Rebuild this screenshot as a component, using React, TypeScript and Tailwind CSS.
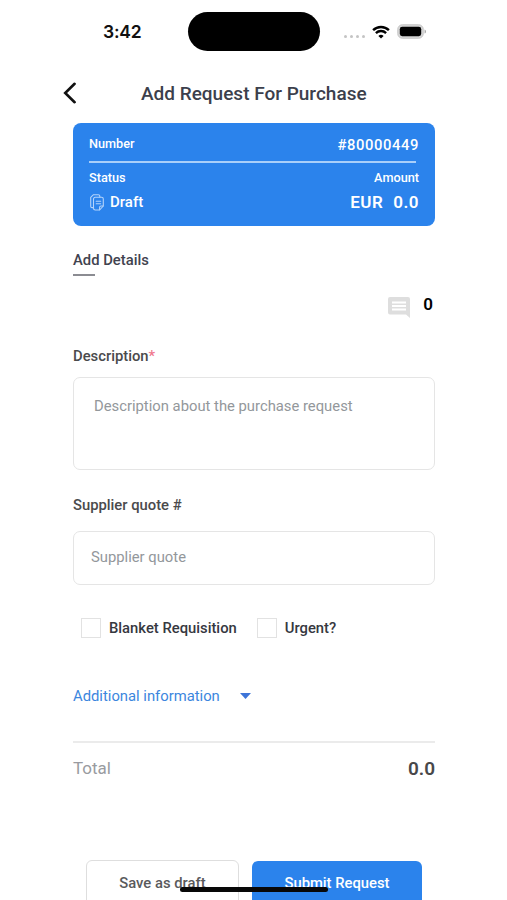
import type { ReactNode } from "react";

interface CheckProps {
  label: string;
}

function StatusBar() {
  return (
    <div className="relative flex h-[63px] items-center">
      <span className="ml-[103px] mt-[1px] w-[85px] font-['Inter'] text-[17.5px] font-semibold leading-none tracking-[-0.2px] text-[#111]">
        3:42
      </span>
      <div className="h-[39px] w-[132px] rounded-full bg-black" />
      <div className="ml-[24px] mt-[10px] flex gap-[3px]">
        {[0, 1, 2, 3].map((i) => (
          <span key={i} className="size-[3px] rounded-full bg-[#c4c4c4]" />
        ))}
      </div>
      <svg className="ml-[7px] h-[14px] w-[18px]" viewBox="0 0 18 14" fill="none">
        <path d="M1.1 5.2a11.2 11.2 0 0 1 15.8 0" stroke="#000" strokeWidth="2.4" />
        <path d="M3.9 8.1a7.2 7.2 0 0 1 10.2 0" stroke="#000" strokeWidth="2.3" />
        <path d="M9 13.6 6.4 11a3.7 3.7 0 0 1 5.2 0z" fill="#000" />
      </svg>
      <svg className="ml-[7px] h-[15px] w-[30px]" viewBox="0 0 30 15">
        <rect x=".75" y=".75" width="25.5" height="13.5" rx="4.6" fill="#d6d6d6" stroke="#c6c6c6" />
        <rect x="2.8" y="2.8" width="21.4" height="9.4" rx="2.4" fill="#000" />
        <path d="M27.6 5.4c1.7.6 1.7 3.6 0 4.2z" fill="#999" />
      </svg>
    </div>
  );
}

function DraftIcon() {
  return (
    <svg
      className="h-[17px] w-[14px]"
      viewBox="0 0 14 17"
      fill="none"
      stroke="#b4d3fa"
      strokeWidth="1.1"
      strokeLinecap="round"
      strokeLinejoin="round"
    >
      <path d="M9.8 3V2A1.4 1.4 0 0 0 8.4.7H3.5L.7 3.4v8.8c0 .8.6 1.4 1.4 1.4H3" />
      <path d="M5.2 3.3h6.4A1.7 1.7 0 0 1 13.3 5v7l-3.7 4H5.2a1.7 1.7 0 0 1-1.7-1.7V5a1.7 1.7 0 0 1 1.7-1.7z" />
      <path d="M13.1 12H11a1.4 1.4 0 0 0-1.4 1.4v2.4M6.2 7.2h4.500M6.200 9.700h4.500" />
    </svg>
  );
}

function SummaryCard() {
  return (
    <section className="h-[103px] rounded-[8px] bg-[#2b83ec] px-[16px] text-white">
      <div className="flex h-[38px] items-center justify-between pt-[4px]">
        <span className="text-[12.7px] font-medium leading-none">Number</span>
        <span className="pt-[2px] text-[14.8px] font-medium leading-none tracking-[0.6px]">
          #80000449
        </span>
      </div>
      <div className="mr-[3px] h-[2px] bg-[#a9cffa]" />
      <div className="mt-[5px] flex h-[20px] items-center justify-between text-[12.7px] font-medium leading-none">
        <span>Status</span>
        <span>Amount</span>
      </div>
      <div className="flex h-[28px] items-center justify-between">
        <div className="flex items-center gap-[6px] pl-[1px]">
          <DraftIcon />
          <span className="text-[15px] font-medium leading-none">Draft</span>
        </div>
        <div className="flex gap-[10px] text-[17px] font-semibold leading-none tracking-[0.5px]">
          <span>EUR</span>
          <span>0.0</span>
        </div>
      </div>
    </section>
  );
}

function Label({ children }: { children: ReactNode }) {
  return (
    <div className="flex h-[20px] items-center text-[14.8px] font-medium leading-none text-[#4a4a4c]">
      {children}
    </div>
  );
}

function Check({ label }: CheckProps) {
  return (
    <label className="flex items-center">
      <span className="size-[20px] border-[1.5px] border-[#e2e2e2] bg-white" />
      <span className="ml-[8px] pt-[1px] text-[14.8px] font-medium leading-none text-[#36383f]">
        {label}
      </span>
    </label>
  );
}

export default function App() {
  return (
    <div className="relative h-[900px] w-[507px] overflow-hidden bg-white font-['Roboto',sans-serif]">
      <StatusBar />

      <header className="flex h-[60px] items-center pl-[63px]">
        <svg className="h-[22px] w-[14px]" viewBox="0 0 14 22" fill="none">
          <path
            d="M11.600 1.800 2.200 11l9.400 9.200"
            stroke="#111"
            strokeWidth="2.6"
            strokeLinecap="round"
          />
        </svg>
        <h1 className="ml-[64px] text-[19px] font-medium leading-none text-[#3c3f4c]">
          Add Request For Purchase
        </h1>
      </header>

      <main className="ml-[73px] w-[362px]">
        <SummaryCard />

        <div className="mt-[24px]">
          <h2 className="flex h-[21px] items-center text-[14.8px] font-medium leading-none text-[#41434f]">
            Add Details
          </h2>
          <div className="mt-[3px] h-[2px] w-[22px] bg-[#8b8c92]" />
        </div>

        <div className="mt-[14px] flex h-[28px] items-center justify-end">
          <svg className="mt-[6px] h-[21px] w-[22px]" viewBox="0 0 22 21">
            <path d="M2 0h18a2 2 0 0 1 2 2v19l-4-3.500H2a2 2 0 0 1-2-2V2a2 2 0 0 1 2-2z" fill="#dedede" />
            <path d="M4 5.500h14M4 9h14M4 12.500h14" stroke="#fff" strokeWidth="1.8" />
          </svg>
          <span className="ml-[13px] mr-[2px] text-[17px] font-semibold leading-none text-black">
            0
          </span>
        </div>

        <div className="mt-[28px]">
          <Label>
            Description<span className="text-[#f0788c]">*</span>
          </Label>
          <textarea
            className="mt-[11px] block h-[93px] w-full resize-none rounded-[7px] border-[1.5px] border-[#e5e5e5] px-[20px] pt-[18px] text-[14.8px] leading-[21px] placeholder:text-[#93979b]"
            placeholder="Description about the purchase request"
          />
        </div>

        <div className="mt-[25px]">
          <Label>Supplier quote #</Label>
          <input
            className="mt-[16px] block h-[54px] w-full rounded-[7px] border-[1.5px] border-[#e5e5e5] px-[17px] pb-[2px] text-[14.8px] placeholder:text-[#93979b]"
            placeholder="Supplier quote"
          />
        </div>

        <div className="ml-[8px] mt-[33px] flex gap-[20px]">
          <Check label="Blanket Requisition" />
          <Check label="Urgent?" />
        </div>

        <button className="mt-[48px] flex h-[20px] items-center text-[14.8px] leading-none text-[#3b86de]">
          Additional information
          <svg className="ml-[20px] h-[6px] w-[11px]" viewBox="0 0 11 6">
            <path d="M0 0h11L5.500 6z" fill="#3d74d8" />
          </svg>
        </button>

        <div className="mt-[35px] h-[2px] bg-[#ebebeb]" />
        <div className="mt-[13px] flex h-[24px] items-center justify-between leading-none">
          <span className="text-[17px] text-[#999ba0]">Total</span>
          <span className="text-[19px] font-semibold text-[#48484a]">0.0</span>
        </div>

        <div className="ml-[13px] mt-[80px] flex w-[336px] justify-between text-[14.8px] font-medium leading-none">
          <button className="h-[54px] w-[153px] rounded-[6px] border-[1.5px] border-[#dedede] bg-white pb-[7px] text-[#5a5a5c]">
            Save as draft
          </button>
          <button className="mt-[1px] h-[54px] w-[170px] rounded-[6px] bg-[#2b83ec] pb-[9px] text-white">
            Submit Request
          </button>
        </div>
      </main>

      {/* home indicator */}
      <div className="absolute left-[180px] top-[886.5px] h-[5px] w-[148px] rounded-full bg-[#080808]" />
    </div>
  );
}
